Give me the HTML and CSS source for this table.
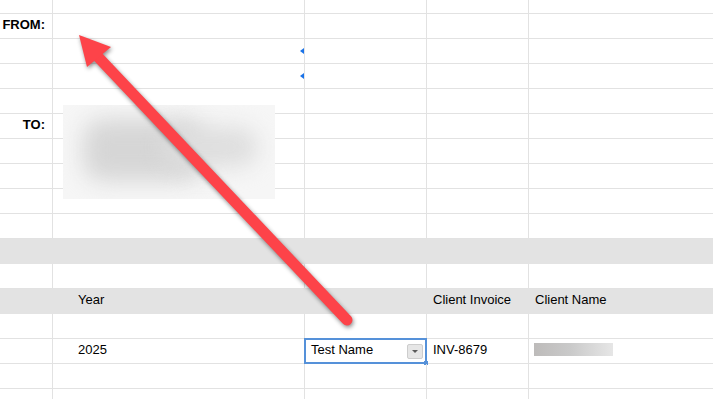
FILE: index.html
```html
<!DOCTYPE html>
<html lang="en">
<head>
<meta charset="utf-8">
<title>Invoice sheet</title>
<link rel="stylesheet" href="styles.css">
</head>
<body>
<div class="sheet">
  <div class="row first"><div class="cell"></div><div class="cell"></div><div class="cell"></div><div class="cell"></div><div class="cell"></div></div>
  <div class="row"><div class="cell label">FROM:</div><div class="cell"></div><div class="cell"></div><div class="cell"></div><div class="cell"></div></div>
  <div class="row"><div class="cell"></div><div class="cell marked"><span class="note-mark"></span></div><div class="cell"></div><div class="cell"></div><div class="cell"></div></div>
  <div class="row"><div class="cell"></div><div class="cell marked"><span class="note-mark"></span></div><div class="cell"></div><div class="cell"></div><div class="cell"></div></div>
  <div class="row"><div class="cell"></div><div class="cell"></div><div class="cell"></div><div class="cell"></div><div class="cell"></div></div>
  <div class="row"><div class="cell label">TO:</div><div class="cell"></div><div class="cell"></div><div class="cell"></div><div class="cell"></div></div>
  <div class="row"><div class="cell"></div><div class="cell"></div><div class="cell"></div><div class="cell"></div><div class="cell"></div></div>
  <div class="row"><div class="cell"></div><div class="cell"></div><div class="cell"></div><div class="cell"></div><div class="cell"></div></div>
  <div class="row"><div class="cell"></div><div class="cell"></div><div class="cell"></div><div class="cell"></div><div class="cell"></div></div>
  <div class="row"><div class="cell"></div><div class="cell"></div><div class="cell"></div><div class="cell"></div><div class="cell"></div></div>
  <div class="row band"><div class="cell"></div><div class="cell"></div><div class="cell"></div><div class="cell"></div><div class="cell"></div></div>
  <div class="row"><div class="cell"></div><div class="cell"></div><div class="cell"></div><div class="cell"></div><div class="cell"></div></div>
  <div class="row band"><div class="cell"></div><div class="cell indent">Year</div><div class="cell"></div><div class="cell pad">Client Invoice</div><div class="cell pad">Client Name</div></div>
  <div class="row"><div class="cell"></div><div class="cell"></div><div class="cell"></div><div class="cell"></div><div class="cell"></div></div>
  <div class="row">
    <div class="cell"></div>
    <div class="cell indent">2025</div>
    <div class="cell pad selected">
      <span class="value">Test Name</span>
      <span class="dropdown"><span class="caret"></span></span>
      <span class="selection"><span class="handle"></span></span>
    </div>
    <div class="cell pad">INV-8679</div>
    <div class="cell pad"><span class="redacted"></span></div>
  </div>
  <div class="row"><div class="cell"></div><div class="cell"></div><div class="cell"></div><div class="cell"></div><div class="cell"></div></div>
  <div class="row"><div class="cell"></div><div class="cell"></div><div class="cell"></div><div class="cell"></div><div class="cell"></div></div>

  <!-- blurred address block floating over the TO: rows -->
  <div class="address-blur"><div class="address-smudge"></div><div class="address-smudge second"></div></div>

  <!-- callout arrow drawn over the grid -->
  <svg class="callout" width="713" height="399" viewBox="0 0 713 399">
    <g class="arrow">
      <line x1="99" y1="58" x2="347" y2="320" stroke="#fd4349" stroke-width="11" stroke-linecap="round"/>
      <polygon points="79,35 111,47 87,67" fill="#fd4349"/>
    </g>
  </svg>
</div>
</body>
</html>
```

FILE: styles.css
```css
html, body {
  margin: 0;
  padding: 0;
  background: #ffffff;
}

body {
  font-family: "Liberation Sans", Arial, sans-serif;
  font-size: 13px;
  color: #000000;
  overflow: hidden;
}

.sheet {
  position: relative;
  width: 713px;
  height: 399px;
  overflow: hidden;
}

.row {
  display: grid;
  grid-template-columns: 53px 252px 122px 102px 1fr;
  height: 25px;
  box-sizing: border-box;
  border-bottom: 1px solid #e2e2e2;
}

.row.first {
  height: 14px;
}

.row.band {
  background: #e3e3e3;
  border-bottom-color: #e3e3e3;
}

.cell {
  position: relative;
  display: flex;
  align-items: flex-end;
  box-sizing: border-box;
  border-right: 1px solid #e2e2e2;
  padding-bottom: 6px;
  line-height: 15px;
  white-space: nowrap;
}

.row.band .cell {
  border-right-color: #e3e3e3;
}

.cell:last-child {
  border-right: none;
}

.cell.label {
  justify-content: flex-end;
  padding-right: 7px;
  font-weight: bold;
}

.cell.indent {
  padding-left: 25px;
}

.cell.pad {
  padding-left: 6px;
}

/* small blue note indicator on the right edge of a cell */
.note-mark {
  position: absolute;
  right: 0;
  top: 9px;
  width: 0;
  height: 0;
  border-top: 3px solid transparent;
  border-bottom: 3px solid transparent;
  border-right: 4px solid #1a73e8;
}

/* dropdown (data validation) cell */
.cell.selected {
  justify-content: space-between;
  padding-right: 3px;
}

.dropdown {
  align-self: center;
  margin-bottom: -6px;
  width: 16px;
  height: 15px;
  box-sizing: border-box;
  background: #e6e6e6;
  border: 1px solid #cdcdcd;
  border-radius: 2px;
  display: flex;
  align-items: center;
  justify-content: center;
}

.caret {
  width: 0;
  height: 0;
  border-left: 3px solid transparent;
  border-right: 3px solid transparent;
  border-top: 3px solid #5a5a5a;
}

.selection {
  position: absolute;
  left: -1px;
  top: -1px;
  width: 123px;
  height: 26px;
  box-sizing: border-box;
  border: 2px solid #5591d9;
}

.handle {
  position: absolute;
  right: -3px;
  bottom: -3px;
  width: 4px;
  height: 4px;
  background: #5591d9;
}

.redacted {
  display: block;
  width: 79px;
  height: 13px;
  margin-bottom: 1px;
  margin-left: -1px;
  background: linear-gradient(90deg, #bdbbba 0%, #c9c9c9 45%, #e6e6e6 100%);
}

/* blurred-out address block */
.address-blur {
  position: absolute;
  left: 63px;
  top: 105px;
  width: 212px;
  height: 94px;
  background: #f6f6f6;
  overflow: hidden;
}

.address-smudge {
  position: absolute;
  left: 20px;
  top: 14px;
  width: 120px;
  height: 62px;
  background: #d6d6d6;
  border-radius: 20px;
  filter: blur(11px);
}

.address-smudge.second {
  left: 100px;
  top: 22px;
  width: 95px;
  height: 40px;
  background: #dedede;
}

.callout {
  position: absolute;
  left: 0;
  top: 0;
  pointer-events: none;
}

.arrow {
  filter: drop-shadow(1px 2px 2px rgba(0, 0, 0, 0.45));
}
```
